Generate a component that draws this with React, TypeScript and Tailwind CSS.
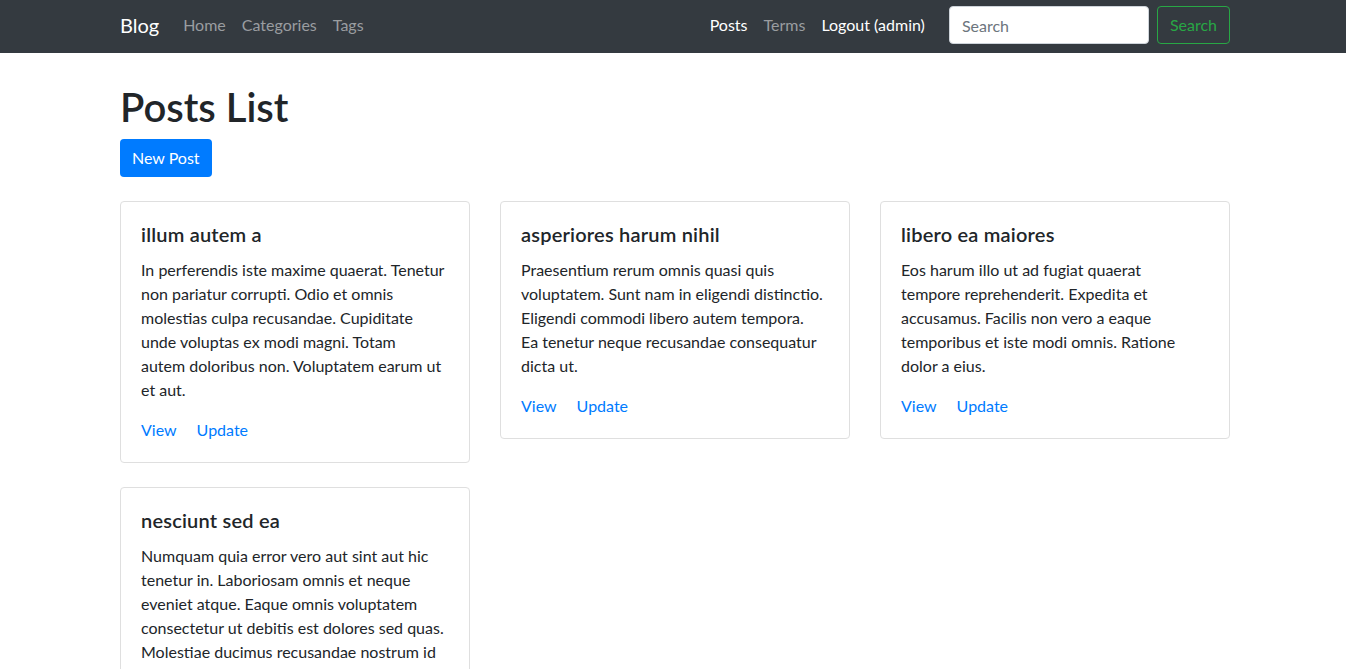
import React from "react";

type Post = { title: string; lines: string[] };

const posts: Post[] = [
  {
    title: "illum autem a",
    lines: [
      "In perferendis iste maxime quaerat. Tenetur",
      "non pariatur corrupti. Odio et omnis",
      "molestias culpa recusandae. Cupiditate",
      "unde voluptas ex modi magni. Totam",
      "autem doloribus non. Voluptatem earum ut",
      "et aut.",
    ],
  },
  {
    title: "asperiores harum nihil",
    lines: [
      "Praesentium rerum omnis quasi quis",
      "voluptatem. Sunt nam in eligendi distinctio.",
      "Eligendi commodi libero autem tempora.",
      "Ea tenetur neque recusandae consequatur",
      "dicta ut.",
    ],
  },
  {
    title: "libero ea maiores",
    lines: [
      "Eos harum illo ut ad fugiat quaerat",
      "tempore reprehenderit. Expedita et",
      "accusamus. Facilis non vero a eaque",
      "temporibus et iste modi omnis. Ratione",
      "dolor a eius.",
    ],
  },
  {
    title: "nesciunt sed ea",
    lines: [
      "Numquam quia error vero aut sint aut hic",
      "tenetur in. Laboriosam omnis et neque",
      "eveniet atque. Eaque omnis voluptatem",
      "consectetur ut debitis est dolores sed quas.",
      "Molestiae ducimus recusandae nostrum id",
      "quia.",
    ],
  },
];

function Card({ post }: { post: Post }) {
  return (
    <div className="self-start rounded-[4px] border border-[#dfdfdf] bg-white p-5">
      <h5 className="mb-3 text-[20px] leading-[24px] font-semibold tracking-[0.2px] text-[#212529]">{post.title}</h5>
      <p className="mb-4 text-[16px] leading-[24px] text-[#212529]">
        {post.lines.map((l, i) => (
          <span key={i} className="block whitespace-nowrap">
            {l}
          </span>
        ))}
      </p>
      <div className="flex gap-5 text-[16px] leading-[24px] text-[#007bff]">
        <a href="#">View</a>
        <a href="#">Update</a>
      </div>
    </div>
  );
}

export default function App() {
  return (
    <div
      className="min-h-screen bg-white text-[#212529]"
      style={{ fontFamily: "Lato, 'Noto Sans', sans-serif" }}
    >
      <nav className="h-[53px] bg-[#343a40] pt-[6px]">
        <div className="ml-[120px] flex h-[38px] w-[1110px] items-center">
          <a href="#" className="mr-4 text-[20px] leading-[30px] text-white">
            Blog
          </a>
          <div className="flex text-[16px] leading-[24px] text-[#9a9da0]">
            <a href="#" className="px-2">Home</a>
            <a href="#" className="px-2">Categories</a>
            <a href="#" className="px-2">Tags</a>
          </div>
          <div className="ml-auto flex text-[16px] leading-[24px]">
            <a href="#" className="px-2 text-white">Posts</a>
            <a href="#" className="px-2 text-[#9a9da0]">Terms</a>
            <a href="#" className="px-2 text-white">Logout (admin)</a>
          </div>
          <div className="ml-4 flex items-center gap-2">
            <input
              placeholder="Search"
              className="h-[38px] w-[200px] rounded-[4px] border border-[#ced4da] bg-white px-3 text-[16px] text-[#495057] placeholder-[#6c757d] outline-none"
            />
            <button className="h-[38px] rounded-[4px] border border-[#28a745] px-3 text-[16px] text-[#28a745]">
              Search
            </button>
          </div>
        </div>
      </nav>
      <main className="ml-[120px] w-[1110px] pt-[30px]">
        <h1 className="mb-2 text-[40px] leading-[48px] font-semibold text-[#212529]">Posts List</h1>
        <button className="h-[38px] rounded-[4px] bg-[#007bff] px-3 text-[16px] text-white">
          New Post
        </button>
        <div className="mt-6 grid grid-cols-3 gap-x-[30px] gap-y-6 pb-6">
          {posts.map((p, i) => (
            <Card key={i} post={p} />
          ))}
        </div>
      </main>
    </div>
  );
}
